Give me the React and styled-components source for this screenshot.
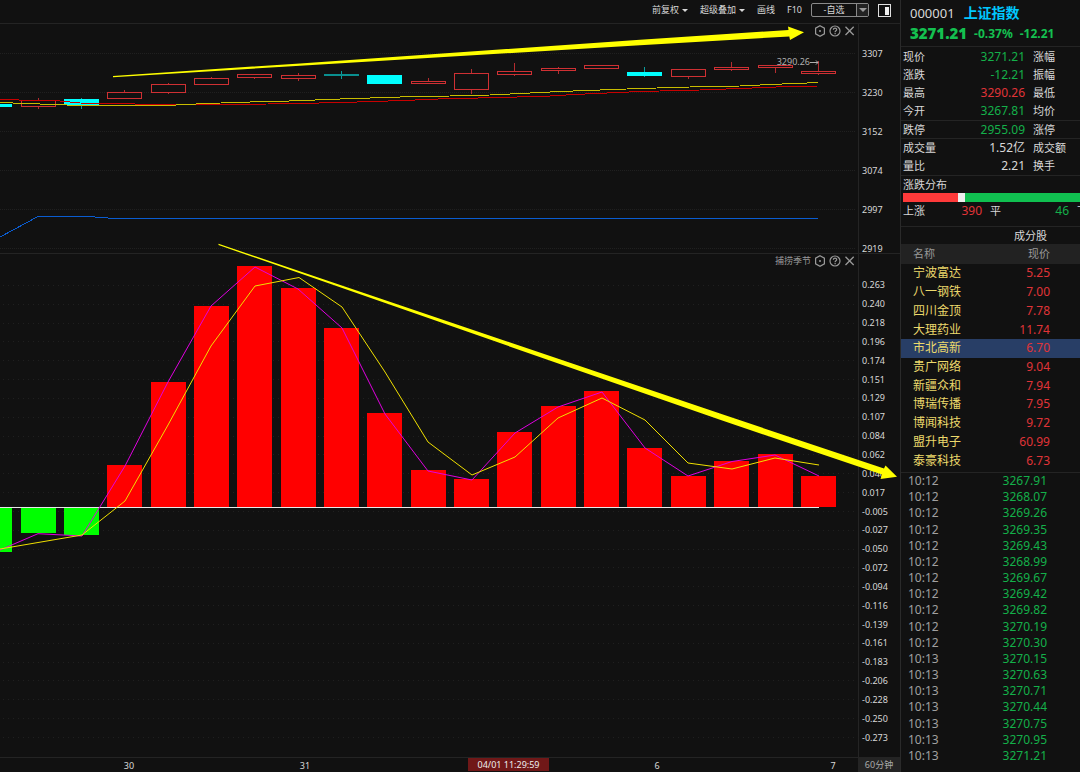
import React from "react";
import styled, { createGlobalStyle } from "styled-components";

const GlobalStyle = createGlobalStyle`
  * { box-sizing: border-box; }
  body {
    margin: 0;
    background: #111;
    color: #d8d8d8;
    font-family: "Noto Sans", "Noto Sans CJK SC", sans-serif;
    font-size: 12px;
    overflow: hidden;
  }
  button, select { font: inherit; color: inherit; }
`;

const RED = "#e03438";
const GREEN = "#14b04a";
const LINE = "#242424";

const Page = styled.div`
  display: flex;
  min-height: 100vh;
`;

const Main = styled.main`
  position: relative;
  flex: 1;
  min-width: 0;
  display: flex;
  flex-direction: column;
`;

const Toolbar = styled.header`
  display: flex;
  align-items: center;
  justify-content: flex-end;
  gap: 9px;
  height: 24px;
  padding: 0 9px 3px 0;
  border-bottom: 1px solid ${LINE};
  font-size: 9px;
`;

const Tools = styled.nav`
  display: flex;
  gap: 12px;
`;

const ToolButton = styled.button`
  display: flex;
  align-items: center;
  gap: 3px;
  padding: 0;
  border: 0;
  background: none;
  line-height: 14px;
  white-space: nowrap;
`;

const Caret = styled.span`
  border: ${(p) => (p.$big ? 4 : 3)}px solid transparent;
  border-top-color: ${(p) => (p.$big ? "#999" : "#d8d8d8")};
  border-bottom: 0;
`;

const Picker = styled.label`
  display: flex;
  align-items: center;
  width: 58px;
  height: 14px;
  border: 1px solid #8a8a8a;
  border-radius: 2px;
`;

const PickerSelect = styled.select`
  appearance: none;
  flex: 1;
  min-width: 0;
  height: 12px;
  padding: 0;
  border: 0;
  background: none;
  text-align: center;
  text-align-last: center;
  line-height: 12px;
`;

const PickerArrow = styled.span`
  display: flex;
  align-items: center;
  justify-content: center;
  width: 12px;
  height: 12px;
  border-left: 1px solid #8a8a8a;
  background: #222;
`;

const Pane = styled.section`
  display: flex;
  flex: ${(p) => (p.$fill ? "1" : "0 0 230px")};
  min-height: 0;
  border-bottom: 1px solid ${LINE};
`;

const Canvas = styled.div`
  position: relative;
  flex: 1;
  min-width: 0;
  overflow: hidden;
`;

const Plot = styled.svg`
  position: absolute;
  inset: 0;
  width: 100%;
  height: 100%;
`;

const Axis = styled.div`
  display: flex;
  flex-direction: column;
  width: 42px;
  padding: ${(p) => p.$pad};
  padding-left: 3px;
  gap: ${(p) => p.$gap || 0}px;
  border-left: 1px solid ${LINE};
  font-size: 9px;
  line-height: 10px;
`;

const AxisLabel = styled.span`
  display: flex;
  align-items: center;
  flex: ${(p) => (p.$grow ? "1" : "none")};
`;

const PaneTools = styled.div`
  position: absolute;
  top: 0;
  right: 3px;
  display: flex;
  align-items: center;
  gap: 3px;
  height: 13px;
  color: #999;
  font-size: 9px;
  line-height: 13px;
`;

const IconButton = styled.button`
  display: flex;
  padding: 0;
  border: 0;
  background: none;
`;

const PriceTag = styled.span`
  position: absolute;
  top: 32px;
  right: 39px;
  color: #b0b0b0;
  font-size: 9px;
  line-height: 12px;
  display: flex;
  align-items: center;
`;

const TimeBar = styled.footer`
  display: flex;
  height: 14px;
  font-size: 9px;
  line-height: 16px;
`;

const Ticks = styled.div`
  position: relative;
  display: flex;
  flex: 1;
  min-width: 0;
  padding-left: 41px;
  overflow: hidden;
`;

const Tick = styled.span`
  flex: 0 0 176px;
  text-align: center;
`;

const Cursor = styled.span`
  position: absolute;
  top: 0;
  left: 468px;
  width: 81px;
  height: 13px;
  line-height: 14px;
  background: #701818;
  color: #eee;
  text-align: center;
`;

const Period = styled.button`
  width: 42px;
  padding: 0;
  border: 0;
  background: #242424;
  color: #aaa;
  line-height: 14px;
`;

const Overlay = styled.svg`
  position: absolute;
  inset: 0;
  width: 100%;
  height: 100%;
  pointer-events: none;
`;

const Side = styled.aside`
  flex: 0 0 180px;
  display: flex;
  flex-direction: column;
  overflow: hidden;
  border-left: 1px solid #2a2a2a;
`;

const Heading = styled.div`
  height: 47px;
  padding: 3px 0 0 9px;
  border-bottom: 1px solid ${LINE};
  white-space: nowrap;
`;

const TitleRow = styled.div`
  display: flex;
  align-items: center;
  gap: 9px;
  height: 20px;
  font-size: 13px;
`;

const Title = styled.h1`
  margin: 0;
  color: #00c8ff;
  font-size: 14px;
  font-weight: 700;
  line-height: 20px;
`;

const QuoteRow = styled.div`
  display: flex;
  align-items: center;
  gap: 7px;
  height: 20px;
  color: #14c050;
  font-weight: 700;
  font-size: 12px;
`;

const LastPrice = styled.strong`
  font-size: 15px;
`;

const Group = styled.div`
  padding-top: ${(p) => p.$top || 0}px;
  border-bottom: 1px solid ${LINE};
`;

const Field = styled.div`
  display: grid;
  grid-template-columns: 40px 82px 48px;
  height: ${(p) => p.$h || 18}px;
  line-height: ${(p) => p.$h || 18}px;
  padding-left: 2px;
  white-space: nowrap;
`;

const Label = styled.span`
  font-size: 11px;
`;

const Value = styled.span`
  color: ${(p) => p.$color || "#d8d8d8"};
  text-align: right;
`;

const After = styled(Label)`
  padding-left: 8px;
`;

const Breadth = styled.div`
  display: flex;
  height: 9px;
  margin-left: 2px;
`;

const Segment = styled.span`
  flex: ${(p) => p.$size};
  background: ${(p) => p.$color};
`;

const Counts = styled.div`
  display: grid;
  grid-template-columns: 40px 39px 40px 47px 30px;
  height: 24px;
  padding-left: 2px;
  line-height: 17px;
  white-space: nowrap;
`;

const Caption = styled.h2`
  margin: 0;
  height: 17px;
  padding-right: 33px;
  text-align: right;
  font-size: 11px;
  font-weight: 400;
  line-height: 18px;
`;

const Stocks = styled.table`
  display: block;
  padding-bottom: 2px;
  border-bottom: 1px solid ${LINE};

  thead { display: block; background: #222; color: #999; font-size: 11px; }
  tbody { display: grid; grid-auto-rows: 1fr; height: 206px; }
`;

const StockRow = styled.tr`
  display: flex;
  align-items: center;
  justify-content: space-between;
  min-height: ${(p) => (p.$head ? 20 : 0)}px;
  padding: 0 30px 0 12px;
  background: ${(p) => (p.$active ? "#283e66" : "none")};

  th, td { padding: 0; font-weight: 400; line-height: 18px; }
`;

const Name = styled.td`
  color: #ecd96c;
`;

const Price = styled.td`
  color: ${RED};
`;

const Ticker = styled.table`
  display: flex;
  flex: 1;

  tbody { display: flex; flex: 1; flex-direction: column; padding-bottom: 8px; }
`;

const TickerRow = styled.tr`
  display: flex;
  flex: 1;
  align-items: center;
  justify-content: space-between;
  padding: 0 33px 0 7px;

  td { padding: 0; line-height: 16px; }
`;

const Time = styled.td`
  color: #a0a0a0;
`;

const Deal = styled.td`
  color: ${GREEN};
`;

const candles = [
  { k: "down", o: 104, c: 107 },
  { k: "up", o: 100, c: 106, h: 98, l: 109 },
  { k: "down", o: 99, c: 105, h: 98, l: 109 },
  { k: "up", o: 92, c: 98, h: 90, l: 99 },
  { k: "up", o: 84, c: 92, h: 83, l: 94 },
  { k: "up", o: 78, c: 84, h: 77, l: 84 },
  { k: "up", o: 74, c: 77, h: 74, l: 79 },
  { k: "up", o: 75, c: 78, h: 73, l: 81 },
  { k: "doji", o: 74, c: 76, h: 71, l: 79 },
  { k: "down", o: 75, c: 84 },
  { k: "up", o: 81, c: 83, h: 78, l: 83 },
  { k: "up", o: 73, c: 89, h: 69, l: 94 },
  { k: "up", o: 71, c: 74, h: 63, l: 76 },
  { k: "up", o: 68, c: 70, h: 67, l: 74 },
  { k: "up", o: 65, c: 68 },
  { k: "down", o: 72, c: 76, h: 67, l: 77 },
  { k: "up", o: 69, c: 76, h: 69, l: 79 },
  { k: "up", o: 67, c: 69, h: 62, l: 71 },
  { k: "up", o: 65, c: 67, h: 65, l: 73 },
  { k: "up", o: 71, c: 73, h: 61, l: 75 },
];

const bars = [552, 533, 535, 465, 382, 306, 266, 288, 328, 413, 470, 479, 432, 406, 391, 448, 476, 461, 454, 476];

const slotLeft = (i) => Math.round(-22.8 + 43.35 * i);

const priceTicks = ["3307", "3230", "3152", "3074", "2997", "2919"];
const indicatorTicks = [
  "0.263", "0.240", "0.218", "0.196", "0.174", "0.151", "0.129", "0.107", "0.084", "0.062", "0.040", "0.017",
  "-0.005", "-0.027", "-0.050", "-0.072", "-0.094", "-0.116", "-0.139", "-0.161", "-0.183", "-0.206", "-0.228",
  "-0.250", "-0.273",
];

const stocks = [
  ["宁波富达", "5.25"], ["八一钢铁", "7.00"], ["四川金顶", "7.78"], ["大理药业", "11.74"],
  ["市北高新", "6.70"], ["贵广网络", "9.04"], ["新疆众和", "7.94"], ["博瑞传播", "7.95"],
  ["博闻科技", "9.72"], ["盟升电子", "60.99"], ["泰豪科技", "6.73"],
];

const deals = [
  ["10:12", "3267.91"], ["10:12", "3268.07"], ["10:12", "3269.26"], ["10:12", "3269.35"], ["10:12", "3269.43"],
  ["10:12", "3268.99"], ["10:12", "3269.67"], ["10:12", "3269.42"], ["10:12", "3269.82"], ["10:12", "3270.19"],
  ["10:12", "3270.30"], ["10:13", "3270.15"], ["10:13", "3270.63"], ["10:13", "3270.71"], ["10:13", "3270.44"],
  ["10:13", "3270.75"], ["10:13", "3270.95"], ["10:13", "3271.21"],
];

const quotes = [
  { top: 1, rows: [["现价", "3271.21", "涨幅", GREEN], ["涨跌", "-12.21", "振幅", GREEN], ["最高", "3290.26", "最低", RED], ["今开", "3267.81", "均价", GREEN]] },
  { h: 17, rows: [["跌停", "2955.09", "涨停", GREEN]] },
  { rows: [["成交量", "1.52亿", "成交额"], ["量比", "2.21", "换手"]] },
];

function PaneControls({ title }) {
  return (
    <PaneTools>
      {title && <span>{title}</span>}
      <IconButton aria-label="设置">
        <svg width="12" height="12" viewBox="0 0 12 12" fill="none" stroke="#999" strokeWidth="1.2">
          <path d="M6 0.8 L10.4 3.2 V8.8 L6 11.2 L1.6 8.8 V3.2 Z" />
          <circle cx="6" cy="6" r="1" fill="#999" stroke="none" />
        </svg>
      </IconButton>
      <IconButton aria-label="帮助">
        <svg width="12" height="12" viewBox="0 0 12 12" fill="none" stroke="#999" strokeWidth="1.2">
          <circle cx="6" cy="6" r="5" />
          <path d="M4.4 4.8 C4.4 2.6 7.7 2.7 7.7 4.7 C7.7 5.9 6.1 5.8 6.1 7.2 M6.1 8.1 V9.2" />
        </svg>
      </IconButton>
      <IconButton aria-label="关闭">
        <svg width="11" height="12" viewBox="0 0 11 12" fill="none" stroke="#999" strokeWidth="1.3">
          <path d="M1.5 1.8 L9.7 10 M9.7 1.8 L1.5 10" />
        </svg>
      </IconButton>
    </PaneTools>
  );
}

function Candle({ data, index }) {
  const x = slotLeft(index);
  const mid = x + 17;
  const up = data.k === "up";
  const color = up ? "#cf3033" : data.k === "doji" ? "#0a8f8f" : "#00ffff";
  const wick = up ? "#b52c2f" : "#0a9c9c";
  return (
    <g>
      {data.h && <path d={`M${mid + 0.5} ${data.h}V${data.o} M${mid + 0.5} ${data.c}V${data.l}`} stroke={wick} />}
      {up ? (
        <rect x={x + 0.5} y={data.o + 0.5} width="34" height={data.c - data.o} fill="none" stroke={color} />
      ) : (
        <rect x={x} y={data.o} width="35" height={data.c - data.o} fill={color} />
      )}
    </g>
  );
}

function PriceChart() {
  return (
    <Plot viewBox="0 24 858 229" preserveAspectRatio="none" shapeRendering="crispEdges" fill="none">
      {[53, 92, 131, 170, 209, 248].map((y) => (
        <path key={y} d={`M0 ${y + 0.5}H856`} stroke="#202020" strokeDasharray="1 1" />
      ))}
      {candles.map((c, i) => <Candle key={i} data={c} index={i} />)}
      <polyline stroke="#c80000" points="0,99.5 37,100.5 60,101 80,103 116,103.5 153,104.5 206,104.5 268,104 306,103.3 342,102.5 388,101 415,100 445,98.7 498,97.6 550,96 572,94.6 600,93.3 640,91.5 700,90 745,88.3 776,87 818,86" />
      <polyline stroke="#c8bc00" points="0,102.5 20,103.3 48,104.3 75,105.3 170,105.3 206,103.5 250,102 275,101.5 300,100.6 340,99 400,97 450,96 490,95 530,93 560,91.5 600,90 640,88.5 690,87 740,86 770,84.5 800,83.3 818,82.5" />
      <polyline stroke="#0a5cd0" points="0,237 38,216.5 88,216.5 112,218.3 818,218.3" />
    </Plot>
  );
}

function IndicatorChart() {
  return (
    <Plot viewBox="0 254 858 503" preserveAspectRatio="none" fill="none">
      {indicatorTicks.map((t, i) => (
        <path key={t} d={`M3 ${Math.round(285 + i * 18.83) + 0.5}H856`} stroke="#202020" strokeDasharray="1 4" />
      ))}
      {bars.map((y, i) => (
        <rect
          key={i}
          x={slotLeft(i)}
          y={Math.min(y, 507)}
          width="35"
          height={Math.abs(507 - y)}
          fill={y > 507 ? "#00ff00" : "#ff0000"}
          shapeRendering="crispEdges"
        />
      ))}
      <path d="M0 507.5H819" stroke="#e8e8e8" />
      <polyline stroke="#e000e0" points="0,550 38,533.7 82,536 125,466 168,382 211,306 255,267 298,289 342,328 385,414 428,471 472,480 515,433 558,407 602,392 645,448 688,476 732,461.5 775,455 819,476" />
      <polyline stroke="#f0e000" points="0,549 82,535 125,501 168,425 211,346 255,286 299,277.5 342,307 385,372 428,442 472,475 515,457 558,418 602,398 645,420 688,463 732,469 775,458 819,465" />
    </Plot>
  );
}

export default function App() {
  return (
    <>
      <GlobalStyle />
      <Page>
        <Main>
          <Toolbar>
            <Tools>
              <ToolButton>前复权<Caret /></ToolButton>
              <ToolButton>超级叠加<Caret /></ToolButton>
              <ToolButton>画线</ToolButton>
              <ToolButton>F10</ToolButton>
            </Tools>
            <Picker>
              <PickerSelect aria-label="自选" defaultValue="a">
                <option value="a">-自选</option>
              </PickerSelect>
              <PickerArrow><Caret $big /></PickerArrow>
            </Picker>
            <IconButton aria-label="侧栏">
              <svg width="13" height="13" viewBox="0 0 13 13">
                <rect x="0.5" y="0.5" width="12" height="12" fill="none" stroke="#e0e0e0" />
                <rect x="7" y="3" width="4" height="8" fill="#f0f0f0" />
              </svg>
            </IconButton>
          </Toolbar>

          <Pane>
            <Canvas>
              <PriceChart />
              <PriceTag>
                3290.26
                <svg width="9" height="6" viewBox="0 0 9 6" fill="none" stroke="#b0b0b0">
                  <path d="M0 3.5H8 M6 1.5L8 3.5L6 5.5" />
                </svg>
              </PriceTag>
              <PaneControls />
            </Canvas>
            <Axis $pad="25px 0 0" $gap={29}>
              {priceTicks.map((t) => <AxisLabel key={t}>{t}</AxisLabel>)}
            </Axis>
          </Pane>

          <Pane $fill>
            <Canvas>
              <IndicatorChart />
              <PaneControls title="捕捞季节" />
            </Canvas>
            <Axis $pad="22px 0 10px">
              {indicatorTicks.map((t) => <AxisLabel key={t} $grow>{t}</AxisLabel>)}
            </Axis>
          </Pane>

          <TimeBar>
            <Ticks>
              <Tick>30</Tick>
              <Tick>31</Tick>
              <Tick />
              <Tick>6</Tick>
              <Tick>7</Tick>
              <Cursor>04/01 11:29:59</Cursor>
            </Ticks>
            <Period>60分钟</Period>
          </TimeBar>

          <Overlay viewBox="0 0 900 772" preserveAspectRatio="none" fill="#ffff00">
            <path d="M113 76 L300 63.4 L640 39.8 L788.5 30 L788 26.5 L804 32.3 L790 40 L789.3 36.5 L640 45.2 L300 65.8 L113 77.2 Z" />
            <path d="M218.5 243.8 L720 413.6 L884 468.5 L885.5 465.5 L897 476.7 L880.5 479 L882 474.5 L720 419.8 L218.5 245 Z" />
          </Overlay>
        </Main>

        <Side>
          <Heading>
            <TitleRow>
              <span>000001</span>
              <Title>上证指数</Title>
            </TitleRow>
            <QuoteRow>
              <LastPrice>3271.21</LastPrice>
              <span>-0.37%</span>
              <span>-12.21</span>
            </QuoteRow>
          </Heading>

          {quotes.map((g, n) => (
            <Group key={n} $top={g.top}>
              {g.rows.map(([label, value, after, color]) => (
                <Field key={label} $h={g.h}>
                  <Label>{label}</Label>
                  <Value $color={color}>{value}</Value>
                  <After>{after}</After>
                </Field>
              ))}
            </Group>
          ))}

          <Group>
            <Field $h={17}><Label>涨跌分布</Label></Field>
            <Breadth>
              <Segment $size={55} $color="#ff3a3a" />
              <Segment $size={7} $color="#eee" />
              <Segment $size={115} $color="#10c050" />
            </Breadth>
            <Counts>
              <Label>上涨</Label>
              <Value $color={RED}>390</Value>
              <After>平</After>
              <Value $color={GREEN}>46</Value>
              <After>下跌</After>
            </Counts>
          </Group>

          <Caption>成分股</Caption>
          <Stocks>
            <thead>
              <StockRow $head><th>名称</th><th>现价</th></StockRow>
            </thead>
            <tbody>
              {stocks.map(([name, price], i) => (
                <StockRow key={name} $active={i === 4}>
                  <Name>{name}</Name>
                  <Price>{price}</Price>
                </StockRow>
              ))}
            </tbody>
          </Stocks>

          <Ticker>
            <tbody>
              {deals.map(([time, price], i) => (
                <TickerRow key={i}>
                  <Time>{time}</Time>
                  <Deal>{price}</Deal>
                </TickerRow>
              ))}
            </tbody>
          </Ticker>
        </Side>
      </Page>
    </>
  );
}
